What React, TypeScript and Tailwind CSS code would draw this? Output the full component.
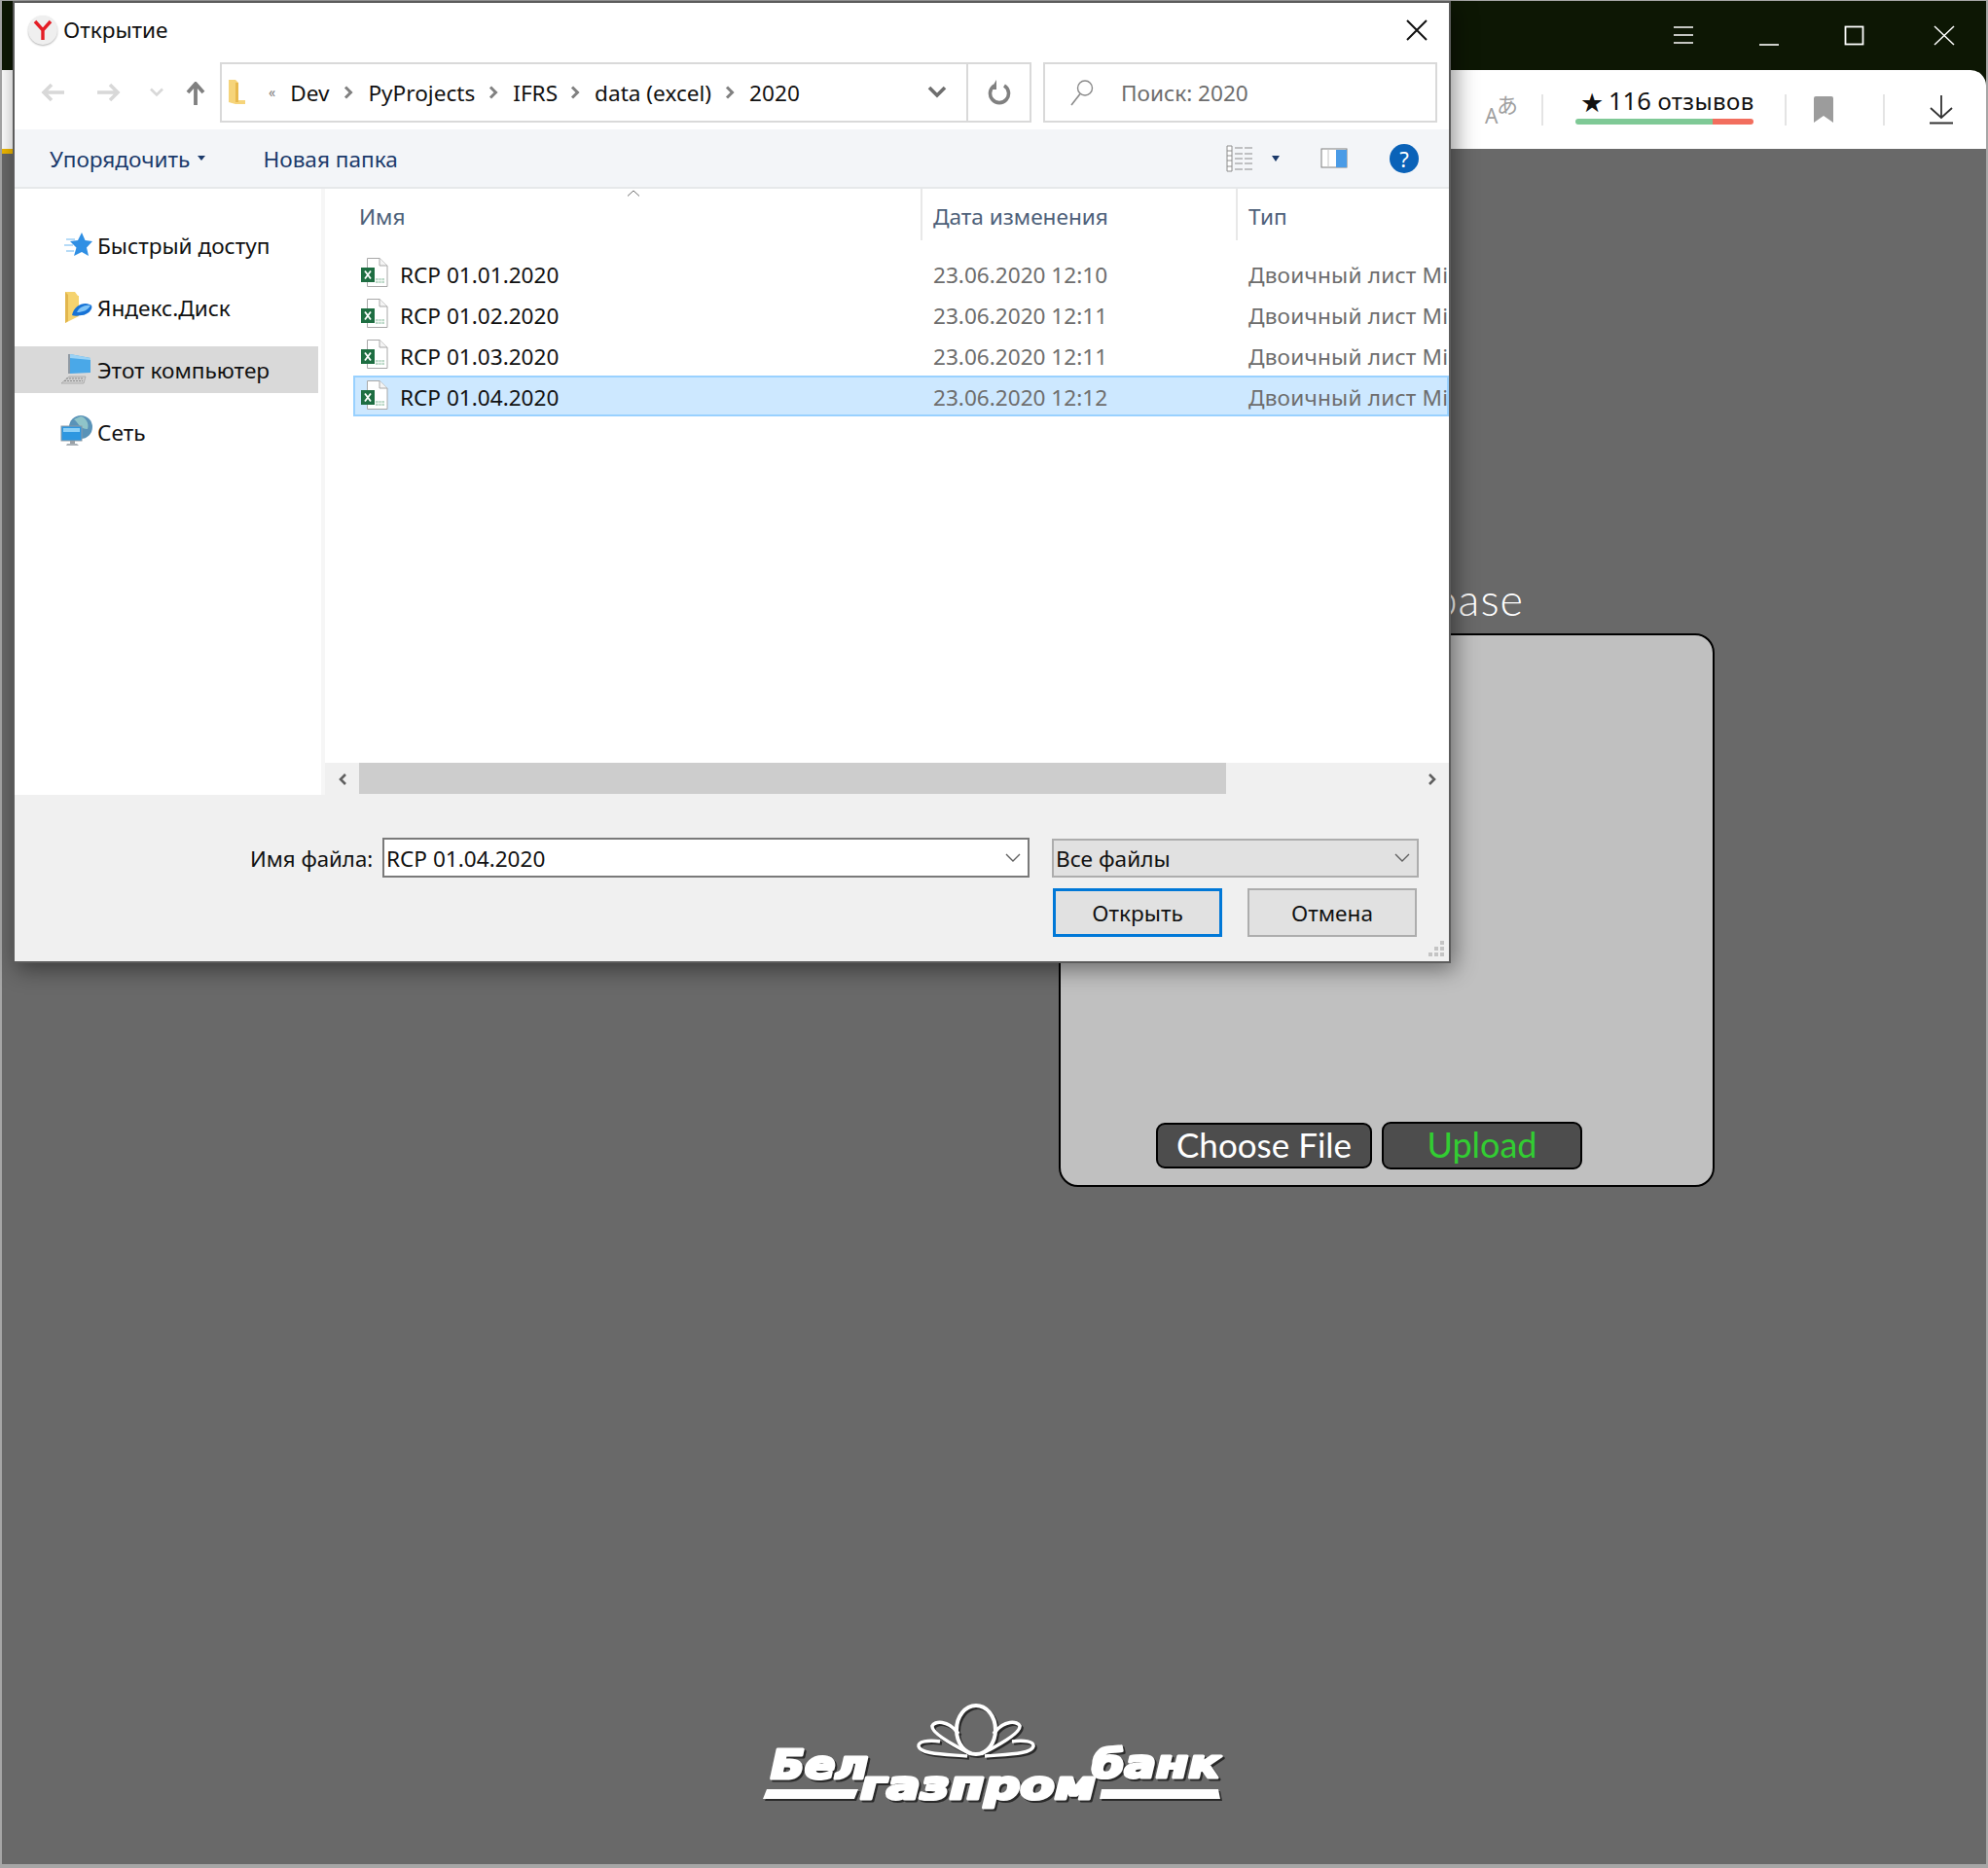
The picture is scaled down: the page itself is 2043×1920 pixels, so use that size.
import React from "react";

const Chev = ({ className = "" }: { className?: string }) => (
  <svg width="10" height="14" viewBox="0 0 10 14" className={className}>
    <path d="M2 1.5 L7.5 7 L2 12.5" fill="none" stroke="#808080" strokeWidth="3" />
  </svg>
);

const Excel = () => (
  <svg width="28" height="30" viewBox="0 0 28 30" className="shrink-0 -mt-[2px]">
    <path d="M6.5 .5 H19 L27 8 V29.5 H6.5 Z" fill="#fff" stroke="#a8a8a8" />
    <path d="M19 .5 V8 H27" fill="#f4f4f4" stroke="#a8a8a8" />
    <rect x="0" y="10" width="14" height="15" fill="#1e6e42" />
    <path d="M4 13.5 L10 21.5 M10 13.5 L4 21.5" stroke="#fff" strokeWidth="1.8" />
    <rect x="15" y="21" width="9" height="5" fill="#bcd9c8" />
    <path d="M18 21 V26 M21 21 V26 M15 23.5 H24" stroke="#fff" strokeWidth=".7" />
  </svg>
);

const Star = () => (
  <svg width="34" height="34" viewBox="0 0 34 34">
    <path d="M22 4 L25.5 12 L33 13 L27 19.5 L29 28 L22 24 L14 28 L16.5 19.5 L10 13 L18 12 Z" fill="#2f8fe4" />
    <path d="M6 11 H15 M4 17 H13 M6 23 H14" stroke="#9fd0f5" strokeWidth="1.4" />
  </svg>
);

const Disk = () => (
  <svg width="34" height="34" viewBox="0 0 34 34">
    <path d="M5 1 H15 L18 5 H19 V26 L5 33 Z" fill="#f5d36f" />
    <path d="M5 1 V33 L8 31 V4 Z" fill="#e2b64d" />
    <path d="M12 25 C14 15 24 11 30 14 C35 14 32 24 22 25 C17 26 14 26 12 25 Z" fill="#1773d6" />
    <path d="M17 22 C19 17 25 14 31 15 C28 20 23 22 17 22 Z" fill="#7fc4f7" />
  </svg>
);

const Computer = () => (
  <svg width="34" height="34" viewBox="0 0 34 34">
    <path d="M10 1 L31 5 V20 L10 21 Z" fill="#4aa8e8" />
    <path d="M10 1 L31 5 V7 L10 5 Z" fill="#9ad2f5" />
    <path d="M8 1 H10 V21 H8 Z" fill="#8f99a3" />
    <path d="M1 31 L9 24 H26 L24 31 Z" fill="#cfcfcf" stroke="#a4a4a4" strokeWidth=".8" />
    <path d="M6 26 H24 M4 28.5 H23" stroke="#888" strokeWidth=".9" strokeDasharray="2 1" />
  </svg>
);

const Network = () => (
  <svg width="34" height="34" viewBox="0 0 34 34">
    <circle cx="21" cy="12" r="12" fill="#5a93b8" />
    <path d="M14 4 C19 8 20 14 28 14 C30 8 26 2 21 1 Z" fill="#8fc4c9" />
    <rect x="1" y="11" width="21" height="15" fill="#2e97e0" stroke="#8e99a3" />
    <rect x="3" y="13" width="17" height="4" fill="#8ed0f6" />
    <path d="M7 29 H17 L19 31 H6 Z" fill="#a9b0b6" />
    <rect x="10" y="26" width="5" height="3" fill="#9aa1a7" />
  </svg>
);

const Logo = () => (
  <div className="w-[500px] h-[140px]">
    <svg width="500" height="140" viewBox="0 0 500 140" className="drop-shadow-[2px_2px_0_#2a2a2a]">
      <g fill="none" stroke="#fff">
        <ellipse cx="233" cy="38" rx="20" ry="25" strokeWidth="4" />
        <path d="M215 42 C204 27 190 29 188 34 C187 41 210 54 228 63" strokeWidth="3.6" />
        <path d="M251 42 C262 27 276 29 278 34 C279 41 256 54 238 63" strokeWidth="3.6" />
        <path d="M224 65 C200 63 176 63 174 55 C173 50 184 48 196 50" strokeWidth="3.4" />
        <path d="M242 65 C266 63 290 63 292 55 C293 50 282 48 270 50" strokeWidth="3.4" />
      </g>
      <g fontFamily="'DejaVu Sans', sans-serif" fontWeight="700" fontStyle="italic" fill="#fff" stroke="#fff" strokeWidth="3.2" strokeLinejoin="round">
        <text x="22" y="88" fontSize="40" textLength="100" lengthAdjust="spacingAndGlyphs">Бел</text>
        <text x="114" y="109" fontSize="41" textLength="242" lengthAdjust="spacingAndGlyphs">газпром</text>
        <text x="352" y="87" fontSize="41" textLength="132" lengthAdjust="spacingAndGlyphs">банк</text>
      </g>
      <path d="M18 99 H112 L108 109 H14 Z M362 99 H482 L484 109 H360 Z" fill="#fff" />
    </svg>
  </div>
);

const rows = [
  ["RCP 01.01.2020", "23.06.2020 12:10"],
  ["RCP 01.02.2020", "23.06.2020 12:11"],
  ["RCP 01.03.2020", "23.06.2020 12:11"],
  ["RCP 01.04.2020", "23.06.2020 12:12"],
];

const nav: [string, React.ReactNode, boolean][] = [
  ["Быстрый доступ", <Star />, false],
  ["Яндекс.Диск", <Disk />, false],
  ["Этот компьютер", <Computer />, true],
  ["Сеть", <Network />, false],
];

const Dialog = () => (
  <div className="absolute left-[13px] top-[1px] w-[1478px] h-[989px] border-2 border-[#5c5c5c] bg-white flex flex-col shadow-[4px_6px_22px_rgba(0,0,0,0.45)] font-['Noto_Sans',sans-serif] text-[22.6px] text-[#111] overflow-hidden">
    {/* title */}
    <div className="h-[61px] shrink-0 flex items-center pl-[14px] pr-[22px] pb-[6px]">
      <div className="w-[30px] h-[30px] rounded-full bg-[#efefef] shadow-[0_1px_2px_rgba(0,0,0,0.3)] flex items-center justify-center mt-[1px]">
        <svg width="20" height="22" viewBox="0 0 20 22">
          <path d="M2 2 L10 11 L18 2 M10 11 V21" fill="none" stroke="#e41e26" strokeWidth="3.4" />
        </svg>
      </div>
      <span className="ml-[6px] leading-none pt-[2px]">Открытие</span>
      <svg width="22" height="22" viewBox="0 0 22 22" className="ml-auto">
        <path d="M1 1 L21 21 M21 1 L1 21" stroke="#111" strokeWidth="2" />
      </svg>
    </div>
    {/* address */}
    <div className="h-[69px] shrink-0 flex items-start">
      <div className="w-[211px] h-[62px] shrink-0 flex items-center pl-[27px]">
        <svg width="24" height="20" viewBox="0 0 24 20">
          <path d="M11 2 L3 10 L11 18 M3 10 H24" fill="none" stroke="#d8d8d8" strokeWidth="3.6" />
        </svg>
        <svg width="24" height="20" viewBox="0 0 24 20" className="ml-[34px]">
          <path d="M13 2 L21 10 L13 18 M21 10 H0" fill="none" stroke="#d8d8d8" strokeWidth="3.6" />
        </svg>
        <svg width="14" height="10" viewBox="0 0 14 10" className="ml-[30px]">
          <path d="M1 1.5 L7 7.5 L13 1.5" fill="none" stroke="#d8d8d8" strokeWidth="2.6" />
        </svg>
        <svg width="20" height="24" viewBox="0 0 20 24" className="ml-[23px] mt-[2px]">
          <path d="M2 11 L10 2 L18 11 M10 2 V24" fill="none" stroke="#808080" strokeWidth="3.8" />
        </svg>
      </div>
      <div className="w-[834px] h-[62px] shrink-0 border-2 border-[#d9d9d9] flex items-center">
        <div className="flex items-center flex-1 pl-[6px]">
          <svg width="20" height="28" viewBox="0 0 20 28" className="shrink-0">
            <path d="M1 1 H8 L11 4 V22 H18 V26 H8 L1 24 Z" fill="#f6d47a" />
            <path d="M8 4 H11 V24 H8 Z" fill="#e8b94e" />
          </svg>
          <span className="ml-[22px] text-[14px] leading-none text-[#808080]">«</span>
          <span className="ml-[15px] pt-[2px]">Dev</span>
          <Chev className="ml-[15px] mr-[15px]" />
          <span className="pt-[2px]">PyProjects</span>
          <Chev className="ml-[14px] mr-[15px]" />
          <span className="pt-[2px]">IFRS</span>
          <Chev className="ml-[13px] mr-[15px]" />
          <span className="pt-[2px]">data (excel)</span>
          <Chev className="ml-[14px] mr-[15px]" />
          <span className="pt-[2px]">2020</span>
          <svg width="20" height="14" viewBox="0 0 20 14" className="ml-auto mr-[20px]">
            <path d="M2 2 L10 10 L18 2" fill="none" stroke="#6e6e6e" strokeWidth="3.6" />
          </svg>
        </div>
        <div className="w-[65px] h-full border-l-2 border-[#d9d9d9] flex items-center justify-center">
          <svg width="24" height="28" viewBox="0 0 24 28">
            <path d="M7 7 A9.5 9.5 0 1 0 17 7" fill="none" stroke="#808080" strokeWidth="3.6" />
            <path d="M9 1 V11 H3 Z" fill="#808080" />
          </svg>
        </div>
      </div>
      <div className="ml-[12px] w-[405px] h-[62px] shrink-0 border-2 border-[#d9d9d9] flex items-center pl-[26px] text-[#6d6d6d]">
        <svg width="24" height="28" viewBox="0 0 24 28">
          <circle cx="15" cy="9.5" r="7.5" fill="none" stroke="#8a8a8a" strokeWidth="1.4" />
          <path d="M10 15.5 L1 27" stroke="#8a8a8a" strokeWidth="1.6" />
        </svg>
        <span className="ml-[28px] pt-[2px]">Поиск: 2020</span>
      </div>
    </div>
    {/* toolbar */}
    <div className="h-[61px] shrink-0 bg-[#f3f5f8] border-b-2 border-[#e6e8ea] flex items-center pl-[36px] text-[#1b3a6b]">
      <span className="pt-[2px]">Упорядочить</span>
      <svg width="8" height="5" viewBox="0 0 8 5" className="ml-[8px]"><path d="M0 0 H8 L4 5 Z" fill="#1b3a6b" /></svg>
      <span className="ml-[59px] pt-[2px]">Новая папка</span>
      <svg width="28" height="28" viewBox="0 0 28 28" className="ml-auto">
        <path d="M1 1 H6 V27 H1 Z M1 6 H6 M1 11 H6 M1 16 H6 M1 22 H6" fill="#fff" stroke="#8c8c8c" />
        <path d="M9 3 H27 M9 9 H27 M9 14 H27 M9 19 H27 M9 25 H27" stroke="#8c8c8c" strokeWidth="1.2" strokeDasharray="8 2" />
      </svg>
      <svg width="8" height="6" viewBox="0 0 8 6" className="ml-[19px]"><path d="M0 0 H8 L4 6 Z" fill="#1b3a6b" /></svg>
      <svg width="28" height="21" viewBox="0 0 28 21" className="ml-[42px]">
        <rect x="1" y="1" width="26" height="19" fill="#fff" stroke="#7f7f7f" />
        <rect x="16" y="2" width="11" height="18" fill="#4a9be6" />
        <path d="M8 1 V20" stroke="#c4c4c4" />
      </svg>
      <div className="ml-[43px] mr-[31px] w-[30px] h-[30px] rounded-full bg-[#0a62b8] text-white flex items-center justify-center text-[22px] leading-none">?</div>
    </div>
    {/* body */}
    <div className="h-[623px] shrink-0 flex">
      <div className="w-[319px] shrink-0 border-r-4 border-[#f6f6f6] pt-[34px] flex flex-col gap-[16px]">
        {nav.map(([t, ic, sel]) => (
          <div key={t} className={`h-[48px] w-[312px] flex items-center pl-[47px] ${sel ? "bg-[#d9d9d9]" : ""}`}>
            <div className="w-[34px] h-[34px] shrink-0">{ic}</div>
            <span className="ml-[4px] pt-[2px] whitespace-nowrap">{t}</span>
          </div>
        ))}
      </div>
      <div className="flex-1 min-w-0 flex flex-col relative">
        <svg width="14" height="7" viewBox="0 0 14 7" className="absolute left-[310px] top-[1px]">
          <path d="M1 6.5 L7 1 L13 6.5" fill="none" stroke="#6a6a6a" />
        </svg>
        <div className="h-[53px] shrink-0 flex text-[#4d6079]">
          <div className="w-[614px] pl-[35px] pt-[12px] border-r-2 border-[#e8e8e8]">Имя</div>
          <div className="w-[324px] pl-[11px] pt-[12px] border-r-2 border-[#e8e8e8]">Дата изменения</div>
          <div className="pl-[11px] pt-[12px]">Тип</div>
        </div>
        <div className="flex-1 pt-[13px] pl-[29px] flex flex-col">
          {rows.map(([n, d], i) => (
            <div key={n} className={`h-[42px] shrink-0 flex items-center pl-[8px] whitespace-nowrap overflow-hidden ${i === 3 ? "bg-[#cde8ff] outline-2 -outline-offset-2 outline-[#99d1ff]" : ""}`}>
              <Excel />
              <span className="ml-[12px] w-[548px] shrink-0 pt-[3px]">{n}</span>
              <span className="w-[324px] shrink-0 pt-[3px] text-[#6d6d6d]">{d}</span>
              <span className="pt-[3px] tracking-[0.2px] text-[#6d6d6d]">Двоичный лист Microsoft</span>
            </div>
          ))}
        </div>
        <div className="h-[33px] shrink-0 bg-[#f0f0f0] flex items-center pl-[4px]">
          <svg width="12" height="16" viewBox="0 0 12 16" className="ml-[8px]"><path d="M9 3 L4 8 L9 13" fill="none" stroke="#606060" strokeWidth="2.6" /></svg>
          <div className="ml-[11px] w-[891px] h-[32px] mb-[1px] bg-[#cdcdcd]" />
          <svg width="12" height="16" viewBox="0 0 12 16" className="ml-auto mr-[11px]"><path d="M3 3 L8 8 L3 13" fill="none" stroke="#606060" strokeWidth="2.6" /></svg>
        </div>
      </div>
    </div>
    {/* bottom */}
    <div className="flex-1 bg-[#f0f0f0] relative pt-[44px] pl-[242px] pr-[31px]">
      <div className="flex items-center h-[41px]">
        <span className="w-[136px] shrink-0 whitespace-nowrap text-[22.2px] pt-[2px]">Имя файла:</span>
        <div className="w-[665px] h-[41px] shrink-0 bg-white border-2 border-[#7a7a7a] flex items-center pl-[2px]">
          <span className="pt-[2px]">RCP 01.04.2020</span>
          <svg width="16" height="10" viewBox="0 0 16 10" className="ml-auto mr-[7px]"><path d="M1 1 L8 8 L15 1" fill="none" stroke="#606060" strokeWidth="1.4" /></svg>
        </div>
        <div className="ml-[23px] w-[377px] h-[40px] shrink-0 bg-[#e1e1e1] border-2 border-[#adadad] flex items-center pl-[2px]">
          <span className="pt-[2px]">Все файлы</span>
          <svg width="16" height="10" viewBox="0 0 16 10" className="ml-auto mr-[7px]"><path d="M1 1 L8 8 L15 1" fill="none" stroke="#606060" strokeWidth="1.4" /></svg>
        </div>
      </div>
      <div className="flex gap-[26px] mt-[11px] pl-[825px]">
        <div className="w-[174px] h-[50px] bg-[#e1e1e1] border-[3px] border-[#0078d7] flex items-center justify-center pt-[2px]">Открыть</div>
        <div className="w-[174px] h-[50px] bg-[#e1e1e1] border-2 border-[#adadad] flex items-center justify-center pt-[2px]">Отмена</div>
      </div>
      <svg width="18" height="18" viewBox="0 0 18 18" className="absolute right-[3px] bottom-[3px]">
        <path d="M12 0 H16 V4 H12 Z M6 6 H10 V10 H6 Z M12 6 H16 V10 H12 Z M0 12 H4 V16 H0 Z M6 12 H10 V16 H6 Z M12 12 H16 V16 H12 Z" fill="#c4c4c4" />
      </svg>
    </div>
  </div>
);

export default function App() {
  return (
    <div className="relative w-[2043px] h-[1920px] bg-[#a6a6a6] pt-px px-[2px] pb-[4px] overflow-hidden">
      <div className="w-full h-full bg-[#0d1704] flex flex-col">
        {/* title bar */}
        <div className="h-[71px] shrink-0 flex items-start justify-end">
          <svg width="22" height="20" viewBox="0 0 22 20" className="mt-[25px]"><path d="M1 2 H21 M1 10 H21 M1 18 H21" stroke="#fff" strokeWidth="1.6" /></svg>
          <svg width="22" height="22" viewBox="0 0 22 22" className="ml-[66px] mt-[25px]"><path d="M1 20 H21" stroke="#fff" strokeWidth="1.6" /></svg>
          <svg width="22" height="22" viewBox="0 0 22 22" className="ml-[66px] mt-[25px]"><rect x="1.5" y="1.5" width="18" height="18" fill="none" stroke="#fff" strokeWidth="1.8" /></svg>
          <svg width="22" height="22" viewBox="0 0 22 22" className="ml-[70px] mr-[32px] mt-[25px]"><path d="M1 1 L21 20 M21 1 L1 20" stroke="#fff" strokeWidth="1.5" /></svg>
        </div>
        {/* browser toolbar */}
        <div className="h-[81px] shrink-0 bg-white rounded-tr-[16px] flex items-center justify-end font-['Noto_Sans',sans-serif] text-[#111]">
          <svg width="44" height="48" viewBox="0 0 44 48">
            <text x="1" y="38" fontSize="21" fontFamily="'Noto Sans', sans-serif" fill="#a0a0a0">A</text>
            <text x="13" y="27" fontSize="22" fontFamily="'Noto Sans CJK JP', sans-serif" fill="#a0a0a0">あ</text>
          </svg>
          <div className="w-[2px] h-[32px] bg-[#e4e4e4] ml-[15px]" />
          <div className="ml-[33px] w-[183px] flex flex-col -mt-[6px]">
            <div className="flex items-center pl-[5px] h-[28px] -mt-[1px] whitespace-nowrap text-[25.5px] leading-none">
              <span className="text-[27px] mr-[5px]">★</span>116&nbsp;<span className="text-[24px] tracking-[0.4px]">отзывов</span>
            </div>
            <div className="h-[6px] flex rounded-[3px] overflow-hidden mt-[4px]">
              <div className="w-[141px] bg-[#7fc996]" />
              <div className="flex-1 bg-[#f26e5e]" />
            </div>
          </div>
          <div className="w-[2px] h-[32px] bg-[#e4e4e4] ml-[32px]" />
          <svg width="20" height="27" viewBox="0 0 20 27" className="ml-[28px]"><path d="M0 2 Q0 0 2 0 H18 Q20 0 20 2 V27 L10 20 L0 27 Z" fill="#9c9c9c" /></svg>
          <div className="w-[2px] h-[32px] bg-[#e4e4e4] ml-[51px]" />
          <svg width="26" height="30" viewBox="0 0 26 30" className="ml-[45px] mr-[33px]">
            <path d="M13 0 V22 M2 13 L13 23 L24 13" fill="none" stroke="#333" strokeWidth="1.8" />
            <path d="M1 28.5 H25" stroke="#333" strokeWidth="2" />
          </svg>
        </div>
        {/* page */}
        <div className="flex-1 bg-[#696969] flex flex-col font-['Lato',sans-serif]">
          <div className="w-[13px] h-[5px] bg-[#f0b800]" />
          <div className="ml-[1086px] mt-[423px] w-[478px] h-[70px] text-right text-white text-[45px] leading-[70px] tracking-[1px] font-light whitespace-nowrap">
            Upload to database
          </div>
          <div className="ml-[1086px] w-[674px] h-[569px] bg-[#c0c0c0] border-2 border-black rounded-[20px] flex items-end pl-[98px] pb-[17px]">
            <div className="w-[222px] h-[47px] bg-[#4d4d4d] border-2 border-black rounded-[9px] flex items-center justify-center pb-[3px] text-white text-[35px] leading-none">Choose File</div>
            <div className="ml-[10px] -mb-[1px] w-[206px] h-[49px] bg-[#4d4d4d] border-2 border-black rounded-[9px] flex items-center justify-center pb-[3px] text-[#32cd32] text-[36px] leading-none">Upload</div>
          </div>
          <div className="ml-[768px] mt-[520px]">
            <Logo />
          </div>
        </div>
      </div>
      <Dialog />
    </div>
  );
}
